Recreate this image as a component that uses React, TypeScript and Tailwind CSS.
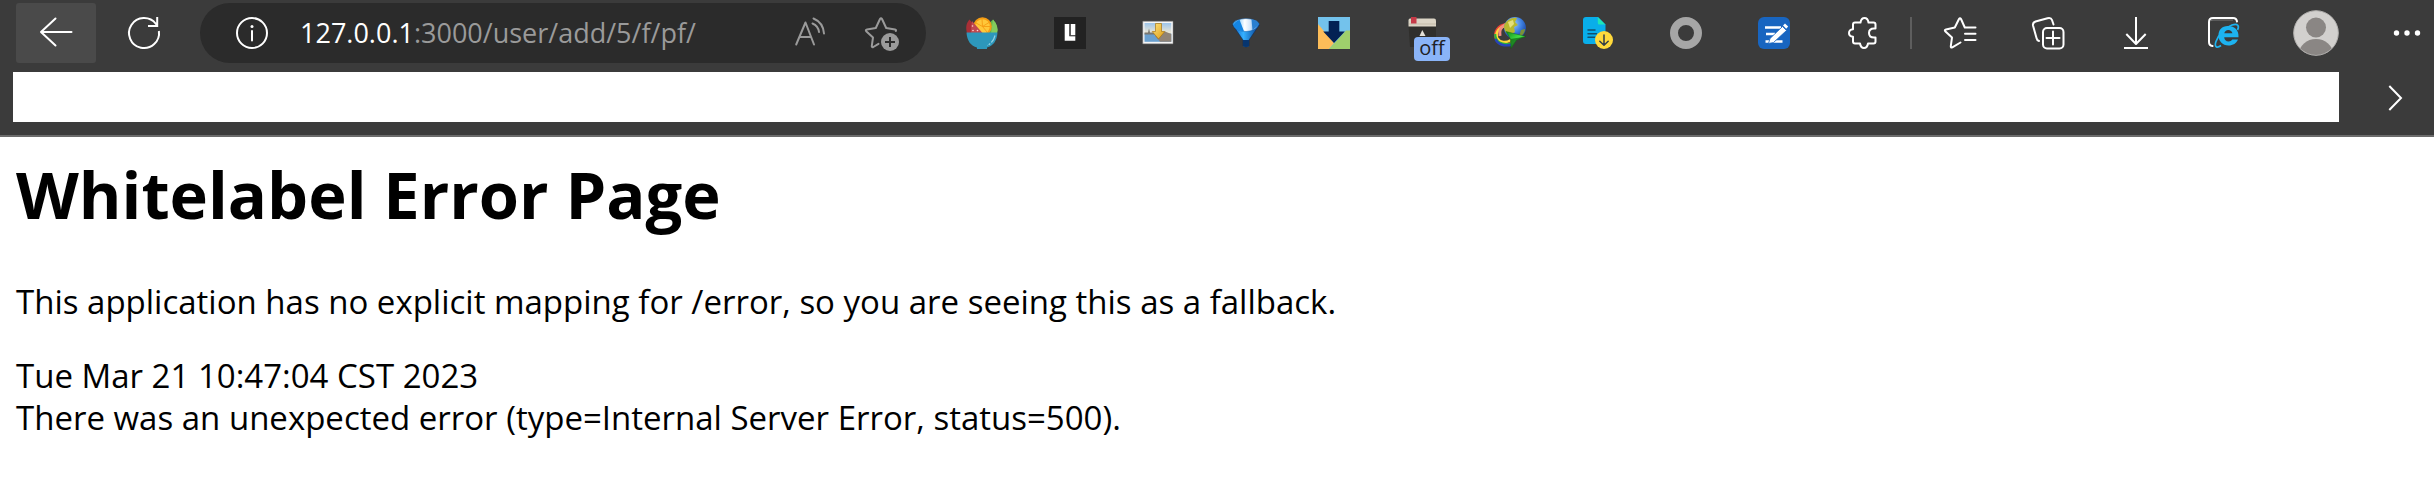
import type { ReactNode } from "react";

const line = {
  fill: "none",
  stroke: "currentColor",
  strokeWidth: 2,
  strokeLinecap: "round" as const,
  strokeLinejoin: "round" as const,
};

function Glyph({ children }: { children: ReactNode }) {
  return (
    <svg viewBox="0 0 32 32" className="size-8 shrink-0 overflow-visible" aria-hidden="true">
      {children}
    </svg>
  );
}

function ToolButton({ label, children }: { label: string; children: ReactNode }) {
  return (
    <button
      type="button"
      aria-label={label}
      className="relative flex h-[60px] w-20 shrink-0 items-center justify-center rounded-[3px] hover:bg-[#4a4a4a]"
    >
      {children}
    </button>
  );
}

function BackIcon() {
  return (
    <Glyph>
      <path {...line} d="M31.5 15H1M15.5 1.5L1 15l14.5 13.500" />
    </Glyph>
  );
}

function RefreshIcon() {
  return (
    <Glyph>
      <path {...line} strokeLinecap="butt" strokeLinejoin="miter" d="M30.900 14A15 15 0 1 1 28 7L29 8.500M29.200 0V9H20" />
    </Glyph>
  );
}

function InfoIcon() {
  return (
    <Glyph>
      <circle {...line} cx="16" cy="16" r="15" />
      <circle cx="16" cy="9.500" r="1.500" fill="currentColor" />
      <path {...line} d="M16 14v9.500" />
    </Glyph>
  );
}

function ReadAloudIcon() {
  return (
    <Glyph>
      <path {...line} d="M1.200 27.500L10.500 5.500 19 27.500M4.500 20H16" />
      <path {...line} d="M18.500 1.500C24.500 4 28.500 9.500 29 16.500M17.500 6.500C21 8 23.500 11 24 15" />
    </Glyph>
  );
}

function AddFavoriteIcon() {
  return (
    <Glyph>
      <path
        {...line}
        d="M13.500 26.800L8.300 30Q6.600 30.700 6.800 28.800L8 20.500 1.200 14.300Q.2 12.800 2 12.400L10.800 11 15 2Q16 .4 17 2L21.200 11 30 12.400Q31.500 12.800 30.800 14"
      />
      <circle cx="25" cy="25" r="9" fill="currentColor" />
      <path d="M25 20v10M20 25h10" stroke="#2b2b2b" strokeWidth="2" />
    </Glyph>
  );
}

function SaladIcon() {
  return (
    <Glyph>
      <path d="M27 2.500Q33 9 31 16H21Q22 6 27 2.500z" fill="#5fb64b" />
      <path d="M27 2.500L25 16h6Q33 9 27 2.500z" fill="#83cb5c" />
      <circle cx="16.500" cy="9.500" r="9.300" fill="#f59c13" />
      <circle cx="16.500" cy="9.500" r="7.300" fill="#ffc83a" />
      <path d="M16.500 9.500L10 6M16.500 9.500L16 2M16.500 9.500L23 5.500M16.500 9.500h7.500M16.500 9.500L21 15" stroke="#f59c13" strokeWidth=".9" />
      <path d="M3.500 2.500C0 6-.5 11 1 16H14.500z" fill="#a92f36" />
      <path d="M6 4L16.500 16H5Q5 10 6 4z" fill="#c1494f" />
      <circle cx="6.500" cy="9" r=".8" fill="#ffd5d5" />
      <circle cx="7" cy="13.500" r=".8" fill="#ffd5d5" />
      <circle cx="11.500" cy="13.500" r=".8" fill="#ffd5d5" />
      <path d="M.5 15.500H31.500C31 24 27 29 21 30.500V32H11V30.500C5 29 1 24 .5 15.500z" fill="#2d97bb" />
      <path d="M29 18.500Q27.500 25 21.500 28.500" stroke="#8fd0e4" strokeWidth="1.200" fill="none" strokeDasharray="8 1.500 2 1" />
    </Glyph>
  );
}

function LetterBlockIcon() {
  return (
    <Glyph>
      <path d="M0 0h32v32H0z" fill="#222" />
      <path d="M10.700 7h4.600v12.300h6v4.400H10.700zM16.700 7h4.600v11.300h-4.600z" fill="#fff" />
      <path d="M16.300 7v11.600h5" fill="none" stroke="#555" strokeWidth=".7" />
    </Glyph>
  );
}

function PhotoDownloadIcon() {
  return (
    <Glyph>
      <defs>
        <linearGradient id="photo-sky" x2="0" y2="1">
          <stop stopColor="#9cc4ea" />
          <stop offset="1" stopColor="#f7ecd2" />
        </linearGradient>
        <linearGradient id="photo-arrow" x2="1" y2="1">
          <stop stopColor="#ffe37a" />
          <stop offset="1" stopColor="#dc9c17" />
        </linearGradient>
      </defs>
      <path d="M.8 4.300h30.200v22.500H.8z" fill="#f6f6f6" stroke="#8b8b8b" strokeWidth=".5" />
      <path d="M2.500 6h26.800v11H2.500z" fill="url(#photo-sky)" />
      <path d="M2.500 16.500h26.800v8.300H2.500z" fill="#6aa0cf" />
      <path d="M13 19l10-4.500 6.300 2.500v7.800H18z" fill="#8f8377" />
      <path d="M6 15.500l1-4 1 4zM2.500 15.500h12v2h-12z" fill="#7a7770" />
      <path d="M13.500 6.500h6v8h3.300l-6.300 7.500-6.300-7.500h3.300z" fill="url(#photo-arrow)" stroke="#a87616" strokeWidth=".7" />
    </Glyph>
  );
}

function FunnelIcon() {
  return (
    <Glyph>
      <defs>
        <linearGradient id="funnel-top">
          <stop stopColor="#2ba3f7" />
          <stop offset=".45" stopColor="#fff" />
          <stop offset=".65" stopColor="#d6e8fa" />
          <stop offset="1" stopColor="#0b6fd2" />
        </linearGradient>
        <linearGradient id="funnel-body">
          <stop stopColor="#0b5cc0" />
          <stop offset=".4" stopColor="#35b0ff" />
          <stop offset="1" stopColor="#063b8d" />
        </linearGradient>
      </defs>
      <path d="M2.700 8L13 23v6q3 2 6 0V23L29.300 8z" fill="url(#funnel-body)" stroke="#102a50" strokeWidth=".6" />
      <path d="M2.700 7Q5 2 16 1.500 27 2 29.300 7 27 14 16 14.500 5 14 2.700 7z" fill="url(#funnel-top)" stroke="#12599f" strokeWidth=".5" />
      <path d="M3.500 9Q4 5 9.500 2.800L14 14.300Q6 13.500 3.500 9z" fill="#1585e2" />
      <path d="M21.500 2.200q6 1 7.500 5l-6.500 6z" fill="#2a7fd0" />
      <path d="M13 23h6v6q-3 2-6 0z" fill="#06356f" />
    </Glyph>
  );
}

function ImageDownloadIcon() {
  return (
    <Glyph>
      <path d="M0 0h32v32H0z" fill="#73c2ec" />
      <path d="M0 7l16 19-5 6H0z" fill="#fdbd59" />
      <path d="M32 13.500h-4L11 32h21z" fill="#9fd06c" />
      <path d="M10.700 4h10.600v10.500h5.500L16 26 5.200 14.500h5.500z" fill="#032154" />
    </Glyph>
  );
}

function BookIcon() {
  return (
    <Glyph>
      <path d="M2.500 8h27.500v22H4z" fill="#302f2c" />
      <path d="M4 1.500h24q2 0 2 2v6H2.500v-6q0-2 1.500-2z" fill="#dcd5c6" />
      <path d="M3 7h27" stroke="#b5ac99" strokeWidth=".6" />
      <path d="M5 0h5.500v6.500H5z" fill="#c63b48" />
      <path d="M16.300 13l3.200 6h-6z" fill="#e5e1d8" />
    </Glyph>
  );
}

function GlobeArrowIcon() {
  return (
    <Glyph>
      <defs>
        <radialGradient id="globe-shade" cx=".4" cy=".3" r=".8">
          <stop stopColor="#a7cffa" />
          <stop offset=".5" stopColor="#3d7fe0" />
          <stop offset="1" stopColor="#0f2f86" />
        </radialGradient>
        <linearGradient id="globe-arrow" x2="1" y2="1">
          <stop stopColor="#0e8a16" />
          <stop offset=".5" stopColor="#45e04a" />
          <stop offset="1" stopColor="#064d0a" />
        </linearGradient>
      </defs>
      <g fill="none" strokeWidth="2.200">
        <path d="M12 7C4 8-1 15 2 22c3 6 11 7 16 3" stroke="#e9433a" />
        <path d="M11 9C5 10 1 16 3 21c3 5 9 5 14 2" stroke="#ffd83a" strokeWidth="2.500" />
        <path d="M1.200 17C1 25 8 28.500 17 26.500" stroke="#2db33b" />
        <path d="M1.500 22C4 28 11 29.500 18 27.500" stroke="#2744b8" strokeWidth="2.400" />
        <path d="M11.500 7.500C6.500 10 5 14 6 19" stroke="#f28d80" strokeWidth="3" />
      </g>
      <circle cx="21" cy="11" r="11" fill="url(#globe-shade)" />
      <path d="M10 9C12 3 18 0 23 1l-2 4 3 3-4 2 1 5-5 3C12 17 10 13 10 9z" fill="#b8b92e" />
      <path d="M14 5l5-2 1 4-4 4z" fill="#e5e07a" />
      <path d="M27 13l4-1c0 4-3 7-6 8z" fill="#7c9138" />
      <path d="M12 14.500L32 19.500 22.500 23 17 31.500 16.500 22z" fill="url(#globe-arrow)" stroke="#0a5510" strokeWidth=".4" />
      <path d="M16.500 22L32 19.500 22.500 23 17 31.500z" fill="#07500c" opacity=".6" />
    </Glyph>
  );
}

function DocumentDownloadIcon() {
  return (
    <Glyph>
      <path d="M4 0h12l7.500 7.500V24a3 3 0 0 1-3 3H4a3 3 0 0 1-3-3V3a3 3 0 0 1 3-3z" fill="#09aeea" />
      <path d="M15.800 0l7.500 7.500h-6q-1.500 0-1.500-1.500z" fill="#1ee5b8" />
      <path d="M6 13h7M6 16.700h8.500M6 20.300h7" stroke="#10506f" strokeWidth="1.500" strokeLinecap="round" />
      <circle cx="22" cy="23" r="9" fill="#ffd93b" />
      <path d="M22 18v10M17.800 24.200L22 28.200l4.200-4" fill="none" stroke="#333d47" strokeWidth="1.500" strokeLinecap="round" strokeLinejoin="round" />
    </Glyph>
  );
}

function RingIcon() {
  return (
    <Glyph>
      <circle cx="16" cy="16" r="12" fill="none" stroke="#a6a6a6" strokeWidth="8" />
    </Glyph>
  );
}

function NoteIcon() {
  return (
    <Glyph>
      <rect width="32" height="32" rx="6" fill="#1865c0" />
      <path d="M7 10.500h16M8 17h9M7.500 24.500h17" stroke="#fff" strokeWidth="2.600" />
      <path d="M24.500 9.500l4 4L15.500 25.500l-5 1 1.500-5z" fill="#fff" stroke="#1865c0" strokeWidth=".8" />
      <path d="M25 8.500l2-2 3.200 3-2 2.200z" fill="#fff" />
    </Glyph>
  );
}

function PuzzleIcon() {
  return (
    <Glyph>
      <path
        {...line}
        d="M9 5.500H14.500C15 2.500 16.500 1 18.500 1S22 2.500 22.500 5.500H27.500Q29.500 5.500 29.500 7.500V11.500H28C24.800 11.500 23 13.500 23 16S24.800 20.500 28 20.500H29.500V24.500Q29.500 26.500 27.500 26.500H22C21.500 29.500 20 31 18 31S14.500 29.500 14 26.500H9Q7 26.500 7 24.500V19.800C4.200 19.500 3 18 3 16S4.200 12.500 7 12.200V7.500Q7 5.500 9 5.500z"
      />
    </Glyph>
  );
}

function FavoritesIcon() {
  return (
    <Glyph>
      <path
        {...line}
        d="M16.500 25.500L8.300 30.300Q6.600 31 6.800 29.200L8 20.500 1.200 14.300Q.2 12.800 2 12.400L10.800 10.500 15 2Q16 .4 17 2L20.800 10.500H31.500M21 16.800H31.500M21 23H31.500"
      />
    </Glyph>
  );
}

function CollectionsIcon() {
  return (
    <Glyph>
      <rect {...line} x="11" y="11" width="20.500" height="20.500" rx="4" />
      <path {...line} d="M21 14.500v13M14.500 21h13M7 24Q5 23.500 4.500 21L1 8.500Q.5 5.500 3.500 4.500L15.500 1.200Q19 .3 20 3L21.500 7.500" />
    </Glyph>
  );
}

function DownloadIcon() {
  return (
    <Glyph>
      <path {...line} strokeLinecap="butt" d="M16 0V27M6.300 17L16 27 25.700 17M4 31H28" />
    </Glyph>
  );
}

function CompatModeIcon() {
  return (
    <Glyph>
      <path {...line} d="M4.500 29Q1 28.500 1 25V5Q1 1 5 1H25Q28.500 1 29 4.500" />
      <path d="M3 4Q3 3 5 3H25" fill="none" stroke="#8a8a8a" strokeWidth=".8" />
      <path
        d="M19.800 9C13.800 9 10.500 13 10.500 18.500S14.500 28.500 20.500 28.500C25 28.500 28.500 26.300 30 22.500H24.300C23.500 23.800 22.300 24.500 20.600 24.500 18 24.500 16.300 22.800 16.200 20.200H30.500C31 13.500 27 9 19.800 9zM16.300 16.200C16.600 14.300 18.200 13 20.300 13S24.200 14.300 24.400 16.200z"
        fill="#1db3f0"
        fillRule="evenodd"
      />
      <path d="M13 28.500C9 31.500 6 30 8 24.500 10.500 17.500 17 10.500 24 8 30 6 31.500 9 29.500 13" fill="none" stroke="#1db3f0" strokeWidth="1.700" />
    </Glyph>
  );
}

function AvatarIcon() {
  return (
    <svg viewBox="0 0 46 46" className="size-[46px] shrink-0" aria-hidden="true">
      <defs>
        <clipPath id="avatar-clip">
          <circle cx="23" cy="23" r="22" />
        </clipPath>
      </defs>
      <circle cx="23" cy="23" r="22.300" fill="#d2d0ce" stroke="#b4b2b0" strokeWidth="1" />
      <g clipPath="url(#avatar-clip)" fill="#8a8684">
        <circle cx="23" cy="17.500" r="10" />
        <ellipse cx="23" cy="44" rx="17" ry="15" />
      </g>
    </svg>
  );
}

const extensions = [
  { label: "Salad", icon: <SaladIcon /> },
  { label: "Block", icon: <LetterBlockIcon /> },
  { label: "Photo saver", icon: <PhotoDownloadIcon /> },
  { label: "Filter", icon: <FunnelIcon /> },
  { label: "Image downloader", icon: <ImageDownloadIcon /> },
  { label: "Reader", icon: <BookIcon />, badge: "off" },
  { label: "Download manager", icon: <GlobeArrowIcon /> },
  { label: "Document downloader", icon: <DocumentDownloadIcon /> },
  { label: "Ring", icon: <RingIcon /> },
  { label: "Notes", icon: <NoteIcon /> },
  { label: "Extensions", icon: <PuzzleIcon /> },
];

function AddressBar() {
  return (
    <div className="ml-4 flex h-[60px] min-w-0 flex-1 items-center rounded-full bg-[#2b2b2b] pr-[10px] pl-9 text-[#9a9a9a]">
      <button type="button" aria-label="View site information" className="text-white">
        <InfoIcon />
      </button>
      <label htmlFor="address" className="ml-8 text-[27px] text-white">
        127.0.0.1
      </label>
      <input
        id="address"
        type="text"
        defaultValue=":3000/user/add/5/f/pf/"
        spellCheck={false}
        className="min-w-0 flex-1 bg-transparent text-[27px] outline-none"
      />
      <button type="button" aria-label="Read aloud" className="flex h-[52px] w-[70px] items-center justify-center">
        <ReadAloudIcon />
      </button>
      <button type="button" aria-label="Add to favorites" className="flex h-[52px] w-[70px] items-center justify-center">
        <AddFavoriteIcon />
      </button>
    </div>
  );
}

function Toolbar() {
  return (
    <nav aria-label="Browser toolbar" className="flex items-center pt-[3px] pl-4">
      <button type="button" aria-label="Back" className="flex h-[60px] w-20 shrink-0 items-center justify-center rounded-[3px] bg-[#4a4a4a]">
        <BackIcon />
      </button>
      <div className="ml-2 flex">
        <ToolButton label="Refresh">
          <RefreshIcon />
        </ToolButton>
      </div>
      <AddressBar />
      <div className="ml-4 flex shrink-0 gap-2">
        {extensions.map((item) => (
          <ToolButton key={item.label} label={item.label}>
            {item.icon}
            {item.badge && (
              <span className="absolute top-[34px] left-8 h-6 w-9 rounded-[4px] bg-[#8ab4f8] text-center text-[20px] leading-[22px] text-[#202124]">
                {item.badge}
              </span>
            )}
          </ToolButton>
        ))}
      </div>
      <div className="mx-2 h-8 w-0.5 shrink-0 bg-[#5e5e5e]" />
      <div className="flex shrink-0 gap-2">
        <ToolButton label="Favorites">
          <FavoritesIcon />
        </ToolButton>
        <ToolButton label="Collections">
          <CollectionsIcon />
        </ToolButton>
        <ToolButton label="Downloads">
          <DownloadIcon />
        </ToolButton>
        <ToolButton label="Internet Explorer mode">
          <CompatModeIcon />
        </ToolButton>
      </div>
      <div className="ml-3 flex shrink-0">
        <ToolButton label="Profile">
          <AvatarIcon />
        </ToolButton>
      </div>
      <button type="button" aria-label="Settings and more" className="ml-6 flex h-[60px] w-[54px] shrink-0 items-center justify-center">
        <Glyph>
          <g fill="currentColor">
            <circle cx="5.500" cy="16" r="2.700" />
            <circle cx="16" cy="16" r="2.700" />
            <circle cx="26.500" cy="16" r="2.700" />
          </g>
        </Glyph>
      </button>
    </nav>
  );
}

function BookmarksBar() {
  return (
    <div className="flex items-center pt-[9px] pb-[13px] pl-[13px]">
      <div className="h-[50px] flex-1 bg-white" />
      <button type="button" aria-label="More bookmarks" className="ml-4 flex h-[50px] w-[79px] items-center justify-center">
        <Glyph>
          <path {...line} strokeLinecap="butt" strokeLinejoin="miter" d="M10.300 5L22 17 10.300 29" />
        </Glyph>
      </button>
    </div>
  );
}

export default function App() {
  return (
    <div className="min-h-screen bg-white font-['Open_Sans','Noto_Sans',sans-serif]">
      <header className="border-b-2 border-[#6b6b6b] bg-[#3b3b3b] text-white">
        <Toolbar />
        <BookmarksBar />
      </header>
      <main className="px-4 pt-3 text-[33px] leading-[42px] text-black">
        <h1 className="text-[65px] leading-[90px] font-bold">Whitelabel Error Page</h1>
        <p className="mt-[42px]">This application has no explicit mapping for /error, so you are seeing this as a fallback.</p>
        <div className="mt-8">Tue Mar 21 10:47:04 CST 2023</div>
        <div>There was an unexpected error (type=Internal Server Error, status=500).</div>
      </main>
    </div>
  );
}
